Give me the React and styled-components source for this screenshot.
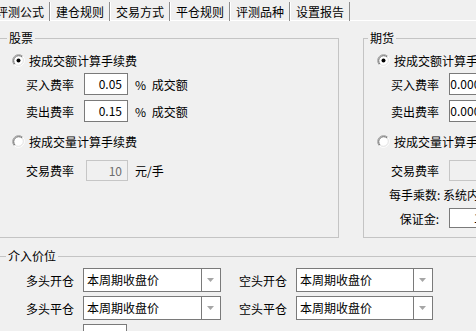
import React from "react";
import styled, { createGlobalStyle } from "styled-components";

const GlobalStyle = createGlobalStyle`
  html, body {
    margin: 0;
    padding: 0;
    background: #f0f0f0;
    overflow: hidden;
  }
  body {
    font-family: "Noto Sans CJK SC", "Microsoft YaHei", sans-serif;
    font-size: 12px;
    color: #000;
  }
`;

const Window = styled.div`
  width: 476px;
  height: 331px;
  overflow: hidden;
  background: #f0f0f0;
`;

const TabBar = styled.div`
  display: flex;
  height: 21px;
  margin-left: -10px;
  border-bottom: 1px solid #ffffff;
  box-sizing: border-box;
`;

const Tab = styled.div`
  width: 60px;
  flex: none;
  box-sizing: border-box;
  margin-top: 2px;
  height: 19px;
  line-height: 19px;
  text-align: center;
  border-left: 1px solid #ffffff;
  border-right: 1px solid #8c8c8c;
  white-space: nowrap;
`;

const Page = styled.div`
  margin-left: -2px;
  padding-top: 9px;
`;

const TopRow = styled.div`
  display: flex;
  gap: 24px;
  align-items: flex-start;
`;

const Group = styled.fieldset`
  margin: 0;
  padding: 0;
  border: 1px solid #c4c4c4;
  min-width: 0;
  flex: none;
  box-sizing: border-box;
  width: ${(p) => p.$w}px;
  height: ${(p) => p.$h}px;
`;

const Legend = styled.legend`
  padding: 0 2px;
  margin-left: ${(p) => p.$offset}px;
  font-size: 12px;
  line-height: 16px;
`;

const GroupBody = styled.div`
  padding-top: ${(p) => p.$top}px;
  display: flex;
  flex-direction: column;
`;

const RadioRow = styled.label`
  display: flex;
  align-items: center;
  gap: 4px;
  height: 16px;
  margin-top: ${(p) => p.$mt || 0}px;
  padding-left: 13px;
  white-space: nowrap;
`;

const FieldRow = styled.div`
  display: flex;
  align-items: center;
  gap: 10px;
  height: 22px;
  margin-top: ${(p) => p.$mt || 0}px;
  padding-left: 27px;
  white-space: nowrap;
`;

const Label = styled.span`
  flex: none;
  width: ${(p) => p.$w || 48}px;
  text-align: right;
  white-space: nowrap;
`;

const Input = styled.div`
  flex: none;
  box-sizing: border-box;
  width: ${(p) => p.$w || 44}px;
  height: ${(p) => p.$h || 22}px;
  margin-left: ${(p) => p.$ml || 0}px;
  border: 1px solid ${(p) => (p.$disabled ? "#c6c6c6" : "#7a7a7a")};
  background: ${(p) => (p.$disabled ? "#f0f0f0" : "#ffffff")};
  color: ${(p) => (p.$disabled ? "#6d6d6d" : "#000")};
  text-align: right;
  padding-right: 5px;
  line-height: ${(p) => (p.$h || 22) - 2}px;
  overflow: hidden;
`;

const Unit = styled.span`
  margin-left: -3px;
  word-spacing: 3px;
`;

const InfoRow = styled.div`
  height: 16px;
  line-height: 16px;
  margin-top: ${(p) => p.$mt || 0}px;
  padding-left: 25px;
  white-space: nowrap;
`;

const EntryGroup = styled(Group)`
  margin-top: 10px;
  width: 500px;
  height: 120px;
`;

const ComboGrid = styled.div`
  display: grid;
  grid-template-columns: 48px 138px 57px 137px;
  column-gap: 9px;
  row-gap: 4px;
  padding-top: 4px;
  padding-left: 27px;
  align-items: center;
`;

const ComboBox = styled.div`
  box-sizing: border-box;
  height: 24px;
  border: 1px solid #7a7a7a;
  background: #fff;
  display: flex;
`;

const ComboText = styled.div`
  flex: 1;
  line-height: 22px;
  padding-left: 3px;
  white-space: nowrap;
  overflow: hidden;
`;

const ComboButton = styled.div`
  width: 18px;
  border-left: 1px solid #7a7a7a;
  display: flex;
  align-items: center;
  justify-content: center;
`;

const RadioIcon = ({ checked }) => (
  <svg width="13" height="13" viewBox="0 0 13 13">
    <circle cx="6.5" cy="6.5" r="5" fill="#fff" />
    <path d="M2.26 10.74 A6 6 0 0 1 10.74 2.26" stroke="#a0a0a0" fill="none" />
    <path d="M10.74 2.26 A6 6 0 0 1 2.26 10.74" stroke="#ffffff" fill="none" />
    <path d="M2.97 10.03 A5 5 0 0 1 10.03 2.97" stroke="#696969" fill="none" />
    <path d="M10.03 2.97 A5 5 0 0 1 2.97 10.03" stroke="#e3e3e3" fill="none" />
    {checked && <circle cx="6.5" cy="6.5" r="2" fill="#000" />}
  </svg>
);

const Arrow = () => (
  <svg width="8" height="5" viewBox="0 0 8 5">
    <path d="M0 0 H7 L3.5 4 Z" fill="#a6a6a6" />
  </svg>
);

const Combo = ({ value }) => (
  <ComboBox>
    <ComboText>{value}</ComboText>
    <ComboButton>
      <Arrow />
    </ComboButton>
  </ComboBox>
);

const tabs = ["评测公式", "建仓规则", "交易方式", "平仓规则", "评测品种", "设置报告"];

export default function App() {
  return (
    <Window>
      <GlobalStyle />
      <TabBar>
        {tabs.map((t) => (
          <Tab key={t}>{t}</Tab>
        ))}
      </TabBar>
      <Page>
        <TopRow>
          <Group $w={341} $h={208}>
            <Legend $offset={8}>股票</Legend>
            <GroupBody $top={6}>
              <RadioRow>
                <RadioIcon checked />
                按成交额计算手续费
              </RadioRow>
              <FieldRow $mt={5}>
                <Label>买入费率</Label>
                <Input>0.05</Input>
                <Unit>% 成交额</Unit>
              </FieldRow>
              <FieldRow $mt={5}>
                <Label>卖出费率</Label>
                <Input>0.15</Input>
                <Unit>% 成交额</Unit>
              </FieldRow>
              <RadioRow $mt={11}>
                <RadioIcon />
                按成交量计算手续费
              </RadioRow>
              <FieldRow $mt={10}>
                <Label>交易费率</Label>
                <Input $disabled $w={42} $h={21} $ml={2}>
                  10
                </Input>
                <Unit>元/手</Unit>
              </FieldRow>
            </GroupBody>
          </Group>
          <Group $w={200} $h={208}>
            <Legend $offset={4}>期货</Legend>
            <GroupBody $top={6}>
              <RadioRow>
                <RadioIcon checked />
                按成交额计算手续费
              </RadioRow>
              <FieldRow $mt={5}>
                <Label>买入费率</Label>
                <Input>0.0003</Input>
                <Unit>% 成交额</Unit>
              </FieldRow>
              <FieldRow $mt={5}>
                <Label>卖出费率</Label>
                <Input>0.0003</Input>
                <Unit>% 成交额</Unit>
              </FieldRow>
              <RadioRow $mt={11}>
                <RadioIcon />
                按成交量计算手续费
              </RadioRow>
              <FieldRow $mt={10}>
                <Label>交易费率</Label>
                <Input $disabled $h={21}>
                  5
                </Input>
                <Unit>元/手</Unit>
              </FieldRow>
              <InfoRow $mt={6}>每手乘数: 系统内置</InfoRow>
              <FieldRow $mt={4}>
                <Label>保证金:</Label>
                <Input $h={20}>10</Input>
                <Unit>%</Unit>
              </FieldRow>
            </GroupBody>
          </Group>
        </TopRow>
        <EntryGroup>
          <Legend $offset={7}>介入价位</Legend>
          <ComboGrid>
            <Label>多头开仓</Label>
            <Combo value="本周期收盘价" />
            <Label $w={57}>空头开仓</Label>
            <Combo value="本周期收盘价" />
            <Label>多头平仓</Label>
            <Combo value="本周期收盘价" />
            <Label $w={57}>空头平仓</Label>
            <Combo value="本周期收盘价" />
            <span />
            <Input $w={44} $h={24} />
          </ComboGrid>
        </EntryGroup>
      </Page>
    </Window>
  );
}
